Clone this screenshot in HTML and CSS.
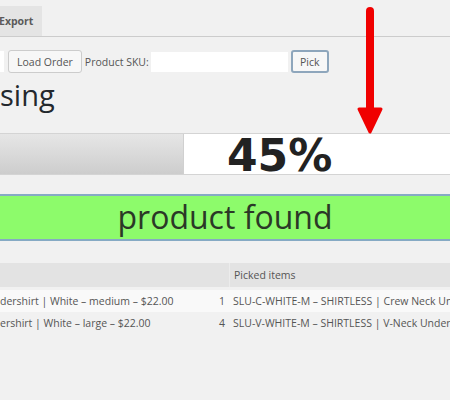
FILE: index.html
```html
<!DOCTYPE html>
<html lang="en">
<head>
  <meta charset="UTF-8" />
  <title>Order Picking</title>
  <link rel="stylesheet" href="styles.css">
</head>
<body>
  <div class="tabs">
    <a class="tab" href="#">Export</a>
  </div>

  <form class="pick-form">
    <input class="order-input" type="text">
    <button class="btn" type="button">Load Order</button>
    <label for="sku">Product SKU:</label>
    <input class="sku-input" id="sku" type="text">
    <button class="btn btn-focus" type="button">Pick</button>
  </form>

  <h1 class="page-title">sing</h1>

  <div class="progress">
    <div class="progress-done"></div>
    <div class="progress-label">45%</div>
  </div>

  <div class="notice">product found</div>

  <table class="items">
    <thead>
      <tr><th class="col-name"></th><th class="col-qty"></th><th class="col-picked">Picked items</th></tr>
    </thead>
    <tbody>
      <tr class="alt">
        <td class="col-name">dershirt | White – medium – $22.00</td>
        <td class="col-qty">1</td>
        <td class="col-picked">SLU-C-WHITE-M – SHIRTLESS | Crew Neck Undershirt</td>
      </tr>
      <tr>
        <td class="col-name">ershirt | White – large – $22.00</td>
        <td class="col-qty">4</td>
        <td class="col-picked">SLU-V-WHITE-M – SHIRTLESS | V-Neck Undershirt</td>
      </tr>
    </tbody>
  </table>

  <!-- annotation arrow drawn over the screenshot -->
  <svg class="arrow" width="30" height="136" viewBox="0 0 30 136">
    <line x1="15" y1="11" x2="15" y2="110" stroke="#f00000" stroke-width="8" stroke-linecap="round"/>
    <path d="M4 109 L26 109 L15 132 Z" fill="#f00000" stroke="#f00000" stroke-width="3" stroke-linejoin="round"/>
  </svg>
</body>
</html>
```

FILE: styles.css
```css
body {
  font-family: "Open Sans", "Liberation Sans", sans-serif;
  background-color: #f1f1f1;
  color: #555;
  margin: 0;
  width: 450px;
  height: 400px;
  overflow: hidden;
  position: relative;
}

.tabs {
  height: 36px;
  border-bottom: 1px solid #ccc;
  display: flex;
  align-items: flex-end;
}

.tab {
  display: block;
  height: 30px;
  line-height: 30px;
  margin-left: -10px;
  padding: 0 9px;
  background: #e4e4e4;
  color: #5a5a5a;
  font-weight: bold;
  font-size: 10.5px;
  text-decoration: none;
}

.pick-form {
  display: flex;
  align-items: center;
  margin-top: 13px;
  height: 23px;
  font-size: 10.5px;
}

.order-input {
  width: 10px;
  height: 21px;
  margin: 0 4px 0 -6px;
  padding: 0;
  border: 0;
  background: #fff;
}

.btn {
  height: 23px;
  padding: 0 8px;
  background: #f7f7f7;
  border: 1px solid #ccc;
  border-radius: 3px;
  color: #555;
  font-family: inherit;
  font-size: 10.5px;
}

.btn-focus {
  border: 2px solid #8ea6bc;
  padding: 0 7px;
  width: 38px;
}

.pick-form label {
  margin-left: 3px;
}

.sku-input {
  width: 137px;
  height: 20px;
  margin: 0 3px 0 2px;
  padding: 0;
  border: 0;
  background: #fff;
}

.page-title {
  margin: 2px 0 0 0;
  height: 44px;
  line-height: 40px;
  font-size: 29px;
  font-weight: normal;
  color: #23282d;
}

.progress {
  display: flex;
  margin-top: 14px;
  height: 40px;
  border-top: 1px solid #d4d4d4;
  border-bottom: 1px solid #d4d4d4;
  background: #fff;
}

.progress-done {
  width: 183px;
  background: linear-gradient(#e6e6e6, #cdcdcd);
  border-right: 1px solid #d0d0d0;
}

.progress-label {
  padding-left: 43px;
  font-family: "DejaVu Sans", Verdana, sans-serif;
  font-weight: bold;
  font-size: 44px;
  line-height: 44px;
  color: #222;
}

.notice {
  margin-top: 19px;
  height: 43px;
  line-height: 42px;
  border: 2px solid #86aac4;
  border-left: 0;
  border-right: 0;
  background: #8dfb6b;
  color: #2b3827;
  text-align: center;
  font-size: 32px;
}

.items {
  margin-top: 22px;
  width: 100%;
  border-collapse: separate;
  border-spacing: 0;
  font-size: 10.5px;
  table-layout: fixed;
}

.items th {
  height: 24px;
  background: #e3e3e3;
  text-align: left;
  font-weight: normal;
  padding: 0 5px;
}

.items th.col-picked {
  border-left: 1px solid #ececec;
}

.items td {
  height: 22px;
  padding: 0 5px;
  white-space: nowrap;
  overflow: hidden;
  text-overflow: clip;
}

.items tbody tr:first-child td {
  border-top: 3px solid #f1f1f1;
}

.items .alt td {
  background: #f9f9f9;
}

.items .col-name {
  width: 204px;
  padding-left: 0;
}

.items .col-qty {
  width: 16px;
  padding: 0 4px 0 0;
  text-align: right;
}

.items .col-picked {
  padding-left: 4px;
}

.arrow {
  position: absolute;
  left: 355px;
  top: 0;
}
```
